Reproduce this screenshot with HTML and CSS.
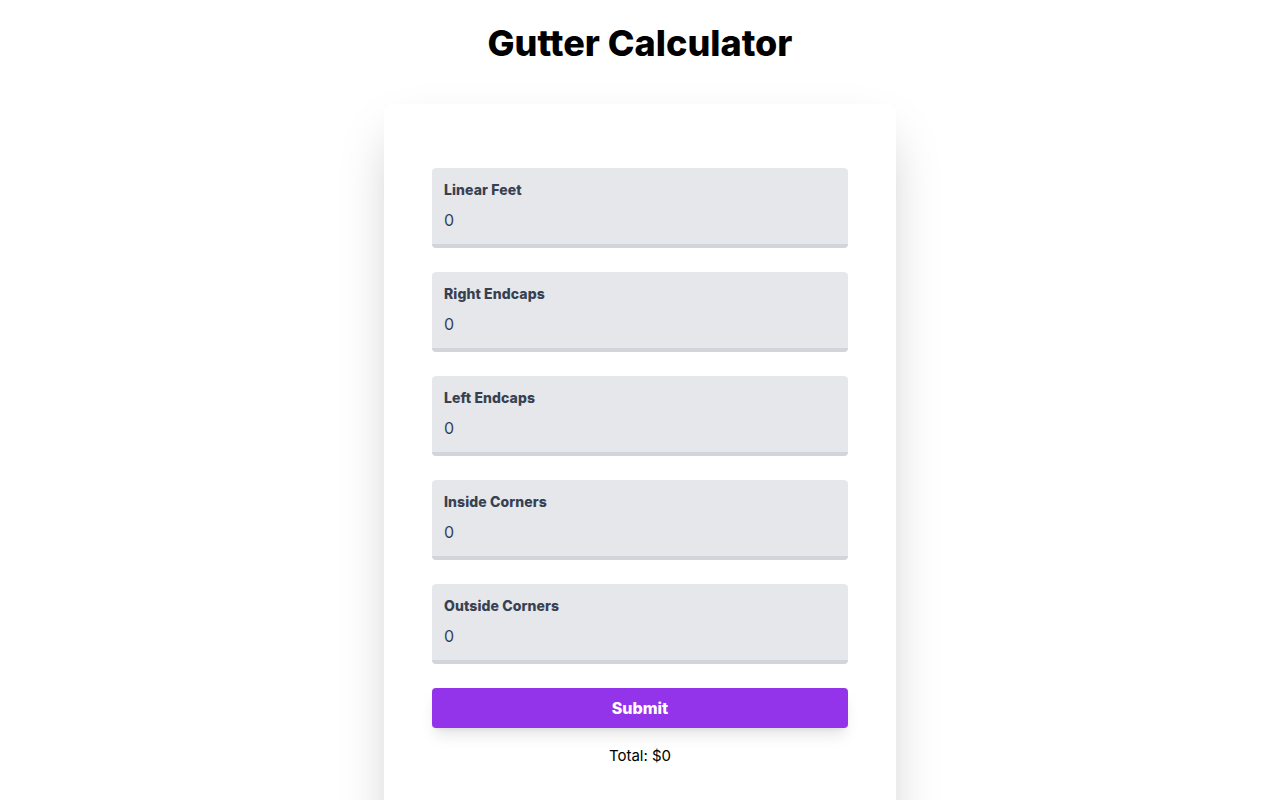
FILE: index.html
```html
<!DOCTYPE html>
<html lang="en">
<head>
<meta charset="utf-8">
<title>Gutter Calculator</title>
<link rel="stylesheet" href="styles.css">
</head>
<body>
<h1 class="title">Gutter Calculator</h1>
<div class="card">
  <form class="form">
    <div class="field">
      <label class="label">Linear Feet</label>
      <input class="input" type="text" value="0">
    </div>
    <div class="field">
      <label class="label">Right Endcaps</label>
      <input class="input" type="text" value="0">
    </div>
    <div class="field">
      <label class="label">Left Endcaps</label>
      <input class="input" type="text" value="0">
    </div>
    <div class="field">
      <label class="label">Inside Corners</label>
      <input class="input" type="text" value="0">
    </div>
    <div class="field">
      <label class="label">Outside Corners</label>
      <input class="input" type="text" value="0">
    </div>
    <button class="submit" type="button">Submit</button>
    <p class="total">Total: $0</p>
  </form>
</div>
</body>
</html>
```

FILE: styles.css
```css
* { box-sizing: border-box; }
html, body { margin: 0; padding: 0; background: #fff; }
body {
  font-family: Inter, "Noto Sans", sans-serif;
  color: #000;
  overflow: hidden;
  height: 800px;
}
.title {
  margin: 0;
  padding-top: 23px;
  font-size: 36px;
  line-height: 40px;
  font-weight: 800;
  text-align: center;
  margin-bottom: 41px;
}
.card {
  width: 512px;
  margin: 0 auto;
  background: #fff;
  border-radius: 8px;
  box-shadow: 0 25px 50px -12px rgba(0,0,0,0.25);
  padding: 64px 48px 40px;
  min-height: 760px;
}
.form { display: flex; flex-direction: column; }
.field {
  background: #e5e7eb;
  border-radius: 4px;
  border-bottom: 4px solid #d1d5db;
  padding: 12px 12px 12px;
  margin-bottom: 24px;
  display: flex;
  flex-direction: column;
}
.label {
  font-size: 14px;
  line-height: 20px;
  font-weight: 800;
  letter-spacing: 0.1px;
  color: #374151;
  margin-bottom: 8px;
}
.input {
  border: 0;
  background: transparent;
  padding: 0;
  font-family: inherit;
  font-size: 16px;
  line-height: 24px;
  height: 24px;
  color: #374151;
  outline: none;
}
.submit {
  height: 40px;
  border: 0;
  border-radius: 4px;
  background: #9333ea;
  color: #fff;
  font-family: inherit;
  font-size: 16px;
  font-weight: 800;
  box-shadow: 0 10px 15px -3px rgba(0,0,0,0.1), 0 4px 6px -4px rgba(0,0,0,0.1);
}
.total {
  margin: 16px 0 0;
  text-align: center;
  font-size: 15px;
  line-height: 24px;
}
```
